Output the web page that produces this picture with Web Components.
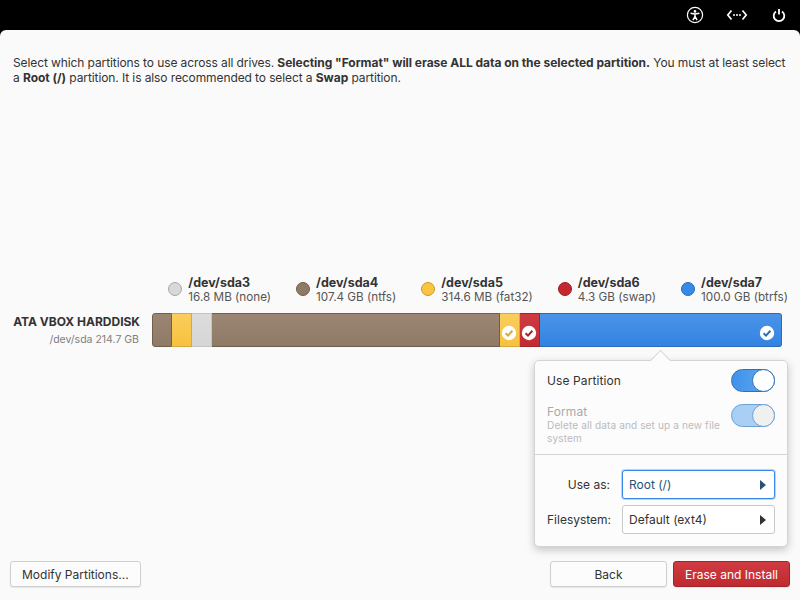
<!DOCTYPE html>
<html>
<head>
<meta charset="utf-8">
<style>
    html, body { margin: 0; padding: 0; width: 800px; height: 600px; overflow: hidden; background: #000; }
    body { font-family: "Inter", "Liberation Sans", sans-serif; font-size: 12px; color: #333; }
    b { letter-spacing: -0.03px; }
    .line { display: block; white-space: pre; }
</style>
</head>
<body>
<installer-app>
    <top-panel slot="panel"></top-panel>
    <div slot="intro">
        <span class="line"><span>Select which partitions to use across all drives. </span><b>Selecting "Format" will erase ALL data on the selected partition.</b><span> You must at least select</span></span>
        <span class="line"><span>a </span><b>Root (/)</b><span> partition. It is also recommended to select a </span><b>Swap</b><span> partition.</span></span>
    </div>
    <disk-view slot="disk"></disk-view>
    <partition-popover slot="popover"></partition-popover>
    <action-button slot="left">Modify Partitions...</action-button>
    <action-button slot="right" style="width:117px">Back</action-button>
    <action-button slot="right" kind="destructive" style="width:117px">Erase and Install</action-button>
</installer-app>

<script>
class InstallerApp extends HTMLElement {
    constructor() {
        super();
        this.attachShadow({ mode: "open" }).innerHTML = /*html*/`
            <style>
                :host { display: flex; flex-direction: column; width: 800px; height: 600px; position: relative; }
                .window {
                    flex: 1;
                    min-height: 0;
                    display: flex;
                    flex-direction: column;
                    background: #fafafa;
                    border-radius: 6px 6px 0 0;
                    padding: 0 10px 13px 10px;
                }
                .intro { margin: 25px 0 0 3px; line-height: 15px; font-size: 12px; color: #333; letter-spacing: -0.1px; }
                .spacer { flex: 1; }
                .actions { display: flex; justify-content: space-between; }
                .right { display: flex; gap: 6px; }
            </style>
            <slot name="panel"></slot>
            <div class="window">
                <div class="intro"><slot name="intro"></slot></div>
                <div class="spacer"></div>
                <slot name="disk"></slot>
                <div class="spacer"></div>
                <div class="actions">
                    <slot name="left"></slot>
                    <div class="right"><slot name="right"></slot></div>
                </div>
            </div>
            <slot name="popover"></slot>
        `;
    }
}

class TopPanel extends HTMLElement {
    constructor() {
        super();
        this.attachShadow({ mode: "open" }).innerHTML = /*html*/`
            <style>
                :host { display: flex; height: 30px; flex: none; align-items: center; justify-content: flex-end; gap: 22px; padding-right: 14px; background: #000; box-sizing: border-box; }
                svg { display: block; fill: none; stroke: #fff; }
            </style>
            <svg width="18" height="18" viewBox="0 0 18 18" stroke-width="1.2">
                <circle cx="9" cy="9" r="7.6"/>
                <circle cx="9" cy="5.4" r="1.3" fill="#fff" stroke="none"/>
                <path d="M4.6 7.2 L9 8.1 L13.4 7.2 M9 8.1 V10.6 M9 10.6 L6.9 14 M9 10.6 L11.1 14" stroke-width="1.5"/>
            </svg>
            <svg width="22" height="14" viewBox="0 0 22 14" stroke-width="1.7">
                <path d="M5.5 2.5 L1.8 7 L5.5 11.5 M16.5 2.5 L20.2 7 L16.5 11.5"/>
                <circle cx="8" cy="7" r="1" fill="#fff" stroke="none"/>
                <circle cx="11" cy="7" r="1" fill="#fff" stroke="none"/>
                <circle cx="14" cy="7" r="1" fill="#fff" stroke="none"/>
            </svg>
            <svg width="14" height="14" viewBox="0 0 14 14" stroke-width="1.8" style="margin-left:2px">
                <path d="M4 3.4 A5.3 5.3 0 1 0 10 3.4 M7 1 V6.6"/>
            </svg>
        `;
    }
}

class LegendItem extends HTMLElement {
    constructor() {
        super();
        const color = this.getAttribute("color");
        const border = this.getAttribute("edge");
        this.attachShadow({ mode: "open" }).innerHTML = /*html*/`
            <style>
                :host { display: flex; align-items: center; gap: 6px; }
                .dot { width: 12px; height: 12px; border-radius: 50%; background: ${color}; border: 1px solid ${border}; flex: none; margin-top: -2px; }
                .name { font-weight: 700; font-size: 12.5px; line-height: 15px; color: #333; }
                .info { font-size: 11.7px; line-height: 15px; color: #555; white-space: nowrap; }
            </style>
            <span class="dot"></span>
            <div>
                <div class="name">${this.getAttribute("name")}</div>
                <div class="info"><slot></slot></div>
            </div>
        `;
    }
}

class BarSegment extends HTMLElement {
    static check = `<svg width="16" height="16" viewBox="0 0 16 16"><circle cx="8" cy="8" r="7.2" fill="#fff"/><path d="M4.6 8.2 L7 10.6 L11.4 5.8" fill="none" stroke="var(--tick)" stroke-width="2"/></svg>`;
    constructor() {
        super();
        const top = this.getAttribute("top");
        const bottom = this.getAttribute("bottom");
        const edge = this.getAttribute("edge");
        const checked = this.hasAttribute("checked");
        this.attachShadow({ mode: "open" }).innerHTML = /*html*/`
            <style>
                :host {
                    display: flex; align-items: flex-end; justify-content: flex-end;
                    box-sizing: border-box; height: 34px; padding: 0 2px 5px 0;
                    background: linear-gradient(${top}, ${bottom});
                    border: 1px solid ${edge};
                    border-left-width: 0;
                    --tick: ${edge};
                }
                :host(:first-child) { border-left-width: 1px; border-radius: 3px 0 0 3px; }
                :host(:last-child) { border-radius: 0 3px 3px 0; padding-right: 6px; }
                svg { display: block; }
            </style>
            ${checked ? BarSegment.check : ""}
        `;
    }
}

class DiskView extends HTMLElement {
    constructor() {
        super();
        this.attachShadow({ mode: "open" }).innerHTML = /*html*/`
            <style>
                :host { display: block; margin-top: 1px; margin-bottom: 25px; }
                .legend { display: flex; gap: 25px; justify-content: flex-end; padding-right: 2px; margin-bottom: 8px; }
                .row { display: flex; align-items: center; }
                .label { width: 130px; margin-right: 12px; text-align: right; }
                .model { font-weight: 700; font-size: 12px; line-height: 15px; color: #333; white-space: nowrap; }
                .path { font-size: 10.5px; line-height: 14px; margin-top: 4px; margin-right: 1px; color: #808080; white-space: nowrap; }
                .bar { display: grid; grid-template-columns: 20px 20px 20px 288px 20px 20px 242px; }
            </style>
            <div class="legend">
                <legend-item name="/dev/sda3" color="#d8d8d8" edge="#a8a8a8">16.8 MB (none)</legend-item>
                <legend-item name="/dev/sda4" color="#8f7a66" edge="#705f4e">107.4 GB (ntfs)</legend-item>
                <legend-item name="/dev/sda5" color="#f9c440" edge="#c99a28">314.6 MB (fat32)</legend-item>
                <legend-item name="/dev/sda6" color="#c6262e" edge="#9a1c22">4.3 GB (swap)</legend-item>
                <legend-item name="/dev/sda7" color="#3689e6" edge="#2a6cb8">100.0 GB (btrfs)</legend-item>
            </div>
            <div class="row">
                <div class="label">
                    <div class="model">ATA VBOX HARDDISK</div>
                    <div class="path">/dev/sda 214.7 GB</div>
                </div>
                <div class="bar">
                    <bar-segment top="#9a8673" bottom="#8f7a66" edge="#6f5f4f"></bar-segment>
                    <bar-segment top="#fbcd5c" bottom="#f6c23e" edge="#d8a93a"></bar-segment>
                    <bar-segment top="#dcdcdc" bottom="#d6d6d6" edge="#c4c4c4"></bar-segment>
                    <bar-segment top="#9a8673" bottom="#8f7a66" edge="#6f5f4f"></bar-segment>
                    <bar-segment top="#fbcd5c" bottom="#f6c23e" edge="#d8a93a" checked></bar-segment>
                    <bar-segment top="#ce3b41" bottom="#c32b32" edge="#a3242a" checked></bar-segment>
                    <bar-segment top="#4a94e8" bottom="#3483e2" edge="#2a6cb8" checked></bar-segment>
                </div>
            </div>
        `;
    }
}

class ToggleSwitch extends HTMLElement {
    constructor() {
        super();
        this.attachShadow({ mode: "open" }).innerHTML = /*html*/`
            <style>
                :host { display: block; width: 44px; height: 23px; flex: none; position: relative; box-sizing: border-box; border-radius: 12px; border: 1px solid #2f6fb5; background: linear-gradient(90deg, #3f92ea, #64aaf0); }
                :host([disabled]) { background: #a9cff6; border-color: #6ea0d4; }
                .knob { position: absolute; top: -1px; right: -1px; box-sizing: border-box; width: 23px; height: 23px; border-radius: 50%; background: #fff; border: 1px solid #2f6fb5; }
                :host([disabled]) .knob { background: #f0f0f0; border-color: #6ea0d4; }
            </style>
            <div class="knob"></div>
        `;
    }
}

class ComboBox extends HTMLElement {
    constructor() {
        super();
        this.attachShadow({ mode: "open" }).innerHTML = /*html*/`
            <style>
                :host { display: flex; align-items: center; justify-content: space-between; box-sizing: border-box; width: 153px; height: 29px; padding: 0 8px 0 6px; border: 1px solid #c8c8c8; border-radius: 3px; background: #fff; font-size: 12px; letter-spacing: 0; color: #333; }
                :host([focused]) { border-color: #3689e6; box-shadow: 0 0 0 1px #b5d6f8; color: #2a5078; }
                .arrow { width: 0; height: 0; border-top: 5px solid transparent; border-bottom: 5px solid transparent; border-left: 6px solid #333; }
                :host([focused]) .arrow { border-left-color: #2a5078; }
            </style>
            <slot></slot>
            <span class="arrow"></span>
        `;
    }
}

class PartitionPopover extends HTMLElement {
    constructor() {
        super();
        this.attachShadow({ mode: "open" }).innerHTML = /*html*/`
            <style>
                :host { display: block; position: absolute; left: 534px; top: 360px; width: 254px; height: 187px; box-sizing: border-box; background: #fcfcfc; border: 1px solid #d4d4d4; border-radius: 5px; box-shadow: 0 3px 8px rgba(0,0,0,.22); font-size: 12px; letter-spacing: .1px; }
                .tip { position: absolute; left: 118px; top: -8px; width: 15px; height: 15px; background: #fcfcfc; border-left: 1px solid #d4d4d4; border-top: 1px solid #d4d4d4; box-sizing: border-box; transform: rotate(45deg); }
                .top { position: relative; padding: 8px 12px 0 12px; height: 94px; box-sizing: border-box; border-bottom: 1px solid #d4d4d4; }
                .line { display: flex; justify-content: space-between; align-items: flex-start; }
                .line + .line { margin-top: 12px; }
                .use { color: #333; line-height: 23px; }
                .fmt { color: #aaa; line-height: 15px; }
                .desc { color: #bbb; font-size: 10.1px; line-height: 13px; width: 178px; }
                .form { display: grid; grid-template-columns: 63px 153px; align-items: center; column-gap: 12px; row-gap: 6px; padding: 15px 12px 0 12px; }
                .form span { text-align: right; color: #333; letter-spacing: 0; white-space: nowrap; }
            </style>
            <div class="tip"></div>
            <div class="top">
                <div class="line"><div class="use">Use Partition</div><toggle-switch></toggle-switch></div>
                <div class="line">
                    <div>
                        <div class="fmt">Format</div>
                        <div class="desc">Delete all data and set up a new file system</div>
                    </div>
                    <toggle-switch disabled></toggle-switch>
                </div>
            </div>
            <div class="form">
                <span>Use as:</span><combo-box focused>Root (/)</combo-box>
                <span>Filesystem:</span><combo-box>Default (ext4)</combo-box>
            </div>
        `;
    }
}

class ActionButton extends HTMLElement {
    constructor() {
        super();
        this.attachShadow({ mode: "open" }).innerHTML = /*html*/`
            <style>
                :host { display: flex; align-items: center; justify-content: center; box-sizing: border-box; height: 26px; padding: 0 11px; border: 1px solid #cfcfcf; border-radius: 3px; background: #fcfcfc; box-shadow: 0 1px 1px rgba(0,0,0,.08); font-size: 12px; color: #333; white-space: nowrap; }
                :host([kind="destructive"]) { background: linear-gradient(#d13a41, #bf2a31); border-color: #a3242a; color: #fff; }
            </style>
            <slot></slot>
        `;
    }
}

customElements.define("top-panel", TopPanel);
customElements.define("legend-item", LegendItem);
customElements.define("bar-segment", BarSegment);
customElements.define("disk-view", DiskView);
customElements.define("toggle-switch", ToggleSwitch);
customElements.define("combo-box", ComboBox);
customElements.define("partition-popover", PartitionPopover);
customElements.define("action-button", ActionButton);
customElements.define("installer-app", InstallerApp);
</script>
</body>
</html>
